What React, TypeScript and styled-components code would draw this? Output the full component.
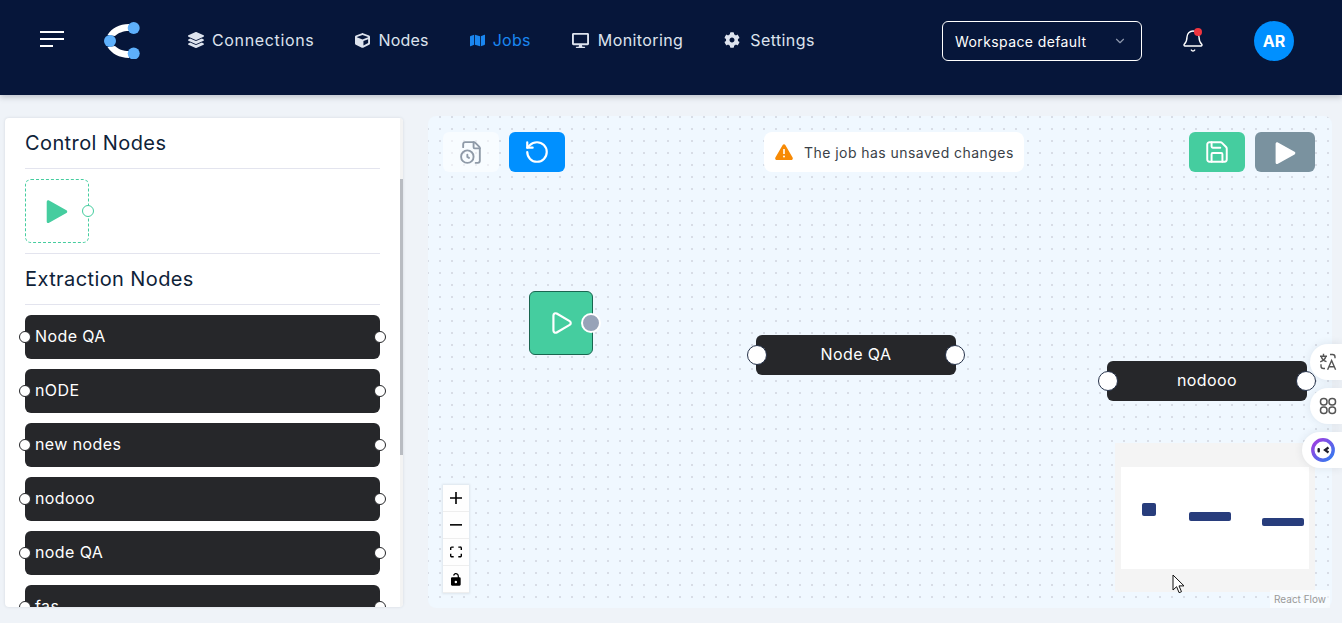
import React from "react";
import styled, { createGlobalStyle } from "styled-components";
import { FaCog, FaCube, FaDesktop, FaLayerGroup, FaMap } from "react-icons/fa";
import { Bell, ChevronDown, FileClock, Play, RotateCcw, Save } from "lucide-react";

const GlobalStyle = createGlobalStyle`
  html, body {
    margin: 0;
    height: 100%;
    overflow: hidden;
    background: #eff3f8;
    font-family: Inter, "Noto Sans", sans-serif;
  }
  * { box-sizing: border-box; }
`;

const navItems = [
  { label: "Connections", icon: <FaLayerGroup size={16} />, gap: 8, spacing: 0.65 },
  { label: "Nodes", icon: <FaCube size={15} />, gap: 8, spacing: 0.2 },
  { label: "Jobs", icon: <FaMap size={15} />, gap: 8, spacing: 0.3, active: true },
  { label: "Monitoring", icon: <FaDesktop size={17} />, gap: 9, spacing: 0.4 },
  { label: "Settings", icon: <FaCog size={16} />, gap: 10, spacing: 0.4 },
];

const extractionNodes = ["Node QA", "nODE", "new nodes", "nodooo", "node QA", "fas"];

const Logo = () => (
  <svg width="36" height="37" viewBox="0 0 36 37">
    <path d="M3.5 13C8 6 15 2 25 2L25 9C19 9 14 11 11 14Z" fill="#fff" />
    <path d="M3.5 25C8 32 15 35.5 25 36L25 29C19 29 14 27 11 24Z" fill="#fff" />
    <circle cx="29.7" cy="6" r="6" fill="#5eb0fb" />
    <circle cx="6" cy="19" r="6" fill="#5eb0fb" />
    <circle cx="29.7" cy="31.5" r="6" fill="#5eb0fb" />
  </svg>
);

const Burger = () => (
  <svg width="24" height="16" viewBox="0 0 24 16">
    <path d="M0 1h24M0 8h24M0 15h13" stroke="#fff" strokeWidth="2" />
  </svg>
);

const FilledPlay = ({ size, color }: { size: number; color: string }) => (
  <svg width={size} height={size} viewBox="1.5 0 24 24">
    <path
      d="M4 3.6c0-1.2 1.2-1.9 2.2-1.3l16 9c1 .6 1 2 0 2.6l-16 9c-1 .6-2.2-.1-2.2-1.3z"
      fill={color}
    />
  </svg>
);

const Warning = () => (
  <svg width="18" height="16" viewBox="0 0 18 16">
    <path
      d="M7.7 1c.6-1 2-1 2.6 0l7.3 12.6c.6 1-.1 2.3-1.3 2.3H1.7C.5 15.9-.2 14.6.4 13.6z"
      fill="#f78a05"
    />
    <path d="M9 5v5" stroke="#fff" strokeWidth="1.6" />
    <circle cx="9" cy="12.5" r="1" fill="#fff" />
  </svg>
);

const TranslateGlyph = () => (
  <svg width="18" height="18" viewBox="0 0 18 18" fill="none" stroke="#555" strokeWidth="1.4">
    <path d="M4.5 .8v2.2M1 3.2h7M2.2 3.500c.8 2.800 2.600 4.300 5.300 5.200M6.800 3.500C6.200 6 4.300 7.800 1.200 8.800" />
    <path d="M8.600 16.800 12.600 7.500l4 9.300M10 13.800h5.200" />
    <path d="M11 1.500h2.500a2.500 2.500 0 0 1 2.500 2.500v1.200M2 11.200v1.800a2.500 2.500 0 0 0 2.500 2.500H6" />
  </svg>
);

const GridGlyph = () => (
  <svg width="18" height="18" viewBox="0 0 18 18" fill="none" stroke="#555" strokeWidth="1.5">
    <rect x="1.5" y="1.5" width="6.5" height="6.5" rx="3" />
    <rect x="10" y="1.5" width="6.5" height="6.5" rx="3" />
    <rect x="1.5" y="10" width="6.5" height="6.5" rx="3" />
    <rect x="10" y="10" width="6.5" height="6.5" rx="3" />
  </svg>
);

const BotGlyph = () => (
  <svg width="24" height="24" viewBox="0 0 24 24">
    <defs>
      <linearGradient id="ring" x1="0" y1="0" x2="1" y2="1">
        <stop offset="0" stopColor="#a33be0" />
        <stop offset="1" stopColor="#2f7df0" />
      </linearGradient>
    </defs>
    <circle cx="12" cy="12" r="10.2" fill="#fff" stroke="url(#ring)" strokeWidth="3.4" />
    <rect x="6.5" y="10" width="2.4" height="4.5" rx="1" fill="#1c1c28" />
    <path d="M17.5 9.5 14 12l3.500 2.500" fill="none" stroke="#1c1c28" strokeWidth="2.200" />
  </svg>
);

const MiniMapDrawing = () => (
  <svg width="200" height="149" viewBox="0 0 200 149">
    <rect width="200" height="149" fill="#f4f4f4" />
    <rect x="6" y="24" width="188" height="102" fill="#fff" />
    <rect x="27" y="60" width="14" height="13" rx="2" fill="#283d7c" />
    <rect x="74" y="69" width="42" height="9" rx="2" fill="#283d7c" />
    <rect x="147" y="75" width="42" height="8" rx="2" fill="#283d7c" />
  </svg>
);

const Cursor = () => (
  <svg width="14" height="20" viewBox="0 0 14 20">
    <path
      d="M1 1v15l3.600-3.300 2.500 6 2.400-1-2.500-5.800h5z"
      fill="#fff"
      stroke="#111"
      strokeWidth="1"
    />
  </svg>
);

export default function App() {
  return (
    <>
      <GlobalStyle />
      <Header>
        <BurgerSlot>
          <Burger />
        </BurgerSlot>
        <LogoSlot>
          <Logo />
        </LogoSlot>
        <Nav>
          {navItems.map((item) => (
            <NavItem
              key={item.label}
              $active={item.active}
              $gap={item.gap}
              $spacing={item.spacing}
            >
              {item.icon}
              <span>{item.label}</span>
            </NavItem>
          ))}
        </Nav>
        <WorkspaceSelect>
          <span>Workspace default</span>
          <ChevronDown size={14} color="#8d97ad" />
        </WorkspaceSelect>
        <BellSlot>
          <Bell size={24} strokeWidth={1.4} color="#fff" />
          <BellDot />
        </BellSlot>
        <Avatar>AR</Avatar>
      </Header>

      <Main>
        <Sidebar>
          <SectionTitle>Control Nodes</SectionTitle>
          <ControlRow>
            <ControlTile>
              <FilledPlay size={26} color="#45cd9f" />
              <ControlHandle />
            </ControlTile>
          </ControlRow>
          <SectionTitle>Extraction Nodes</SectionTitle>
          <NodeList>
            {extractionNodes.map((name) => (
              <NodeBar key={name}>
                <ListHandle $side="left" />
                {name}
                <ListHandle $side="right" />
              </NodeBar>
            ))}
          </NodeList>
          <ScrollTrack>
            <ScrollThumb />
          </ScrollTrack>
        </Sidebar>

        <Canvas>
          <Toolbar>
            <ToolGroup>
              <ToolButton $bg="rgba(255,255,255,0.5)" $w={56}>
                <FileClock size={25} color="#8f9aa8" strokeWidth={1.8} />
              </ToolButton>
              <ToolButton $bg="#0090ff" $w={56}>
                <RotateCcw size={26} color="#fff" strokeWidth={2} />
              </ToolButton>
            </ToolGroup>
            <Notice>
              <Warning />
              The job has unsaved changes
            </Notice>
            <ToolGroup $right>
              <ToolButton $bg="#45cd9f" $w={56}>
                <Save size={26} color="#fff" strokeWidth={1.8} />
              </ToolButton>
              <ToolButton $bg="#7a929f" $w={60}>
                <FilledPlay size={25} color="#fff" />
              </ToolButton>
            </ToolGroup>
          </Toolbar>

          <StartNode>
            <Play size={26} color="#fff" strokeWidth={2} />
            <StartHandle />
          </StartNode>
          <FlowNode $x={328} $y={219}>
            <FlowHandle $side="left" />
            Node QA
            <FlowHandle $side="right" />
          </FlowNode>
          <FlowNode $x={679} $y={245}>
            <FlowHandle $side="left" />
            nodooo
            <FlowHandle $side="right" />
          </FlowNode>

          <ZoomControls>
            <ZoomButton>
              <svg width="12" height="12" viewBox="0 0 32 32">
                <path d="M32 18.133H18.133V32h-4.266V18.133H0v-4.266h13.867V0h4.266v13.867H32z" />
              </svg>
            </ZoomButton>
            <ZoomButton>
              <svg width="12" height="2" viewBox="0 0 32 5">
                <path d="M0 0h32v4.2H0z" />
              </svg>
            </ZoomButton>
            <ZoomButton>
              <svg width="12" height="12" viewBox="0 0 32 30">
                <path d="M3.692 4.63c0-.53.4-.938.939-.938h5.215V0H4.708C2.13 0 0 2.054 0 4.63v5.216h3.692V4.631zM27.354 0h-5.2v3.692h5.17c.53 0 .984.4.984.939v5.215H32V4.631A4.624 4.624 0 0027.354 0zm.954 24.83c0 .532-.4.94-.939.94h-5.215v3.768h5.215c2.577 0 4.631-2.13 4.631-4.707v-5.139h-3.692v5.139zm-23.677.94c-.531 0-.939-.4-.939-.94v-5.138H0v5.139c0 2.577 2.13 4.707 4.708 4.707h5.138V25.77H4.631z" />
              </svg>
            </ZoomButton>
            <ZoomButton>
              <svg width="10" height="13" viewBox="0 0 25 32">
                <path d="M21.333 10.667H19.81V7.619C19.81 3.429 16.38 0 12.19 0c-1.714 0-3.048.381-4.38 1.333-1.43 1.143-2.439 2.572-3.002 4.286l3.143 1.143c.381-1.143.953-2.095 1.81-2.762.857-.666 1.714-.952 2.428-.952 2.476 0 4.571 2.095 4.571 4.571v3.048H2.857A2.865 2.865 0 000 13.524v15.238C0 30.286 1.333 31.619 2.857 31.619h18.476a2.865 2.865 0 002.857-2.857V13.524a2.865 2.865 0 00-2.857-2.857zM12.19 25.524a3.048 3.048 0 110-6.095 3.048 3.048 0 010 6.095z" />
              </svg>
            </ZoomButton>
          </ZoomControls>

          <MiniMapSlot>
            <MiniMapDrawing />
          </MiniMapSlot>
          <CursorSlot>
            <Cursor />
          </CursorSlot>
          <Attribution>React Flow</Attribution>
        </Canvas>
      </Main>

      <FloatDock>
        <FloatButton>
          <TranslateGlyph />
        </FloatButton>
        <FloatButton>
          <GridGlyph />
        </FloatButton>
        <FloatButton $wide>
          <BotGlyph />
        </FloatButton>
      </FloatDock>
    </>
  );
}

const Header = styled.header`
  display: flex;
  align-items: flex-start;
  height: 95px;
  padding: 21px 48px 0 40px;
  background: #06163a;
  box-shadow: 0 2px 6px rgba(30, 40, 60, 0.25);
  position: relative;
`;

const BurgerSlot = styled.div`
  display: flex;
  align-items: center;
  height: 36px;
  width: 24px;
`;

const LogoSlot = styled.div`
  margin-left: 40px;
  height: 37px;
  margin-top: 1px;
`;

const Nav = styled.nav`
  display: flex;
  align-items: center;
  gap: 41px;
  height: 38px;
  margin-left: 48px;
`;

const NavItem = styled.div<{ $active?: boolean; $gap: number; $spacing: number }>`
  display: flex;
  align-items: center;
  gap: ${(p) => p.$gap}px;
  font-size: 16px;
  letter-spacing: ${(p) => p.$spacing}px;
  color: ${(p) => (p.$active ? "#1a86f0" : "#dde3ee")};
`;

const WorkspaceSelect = styled.div`
  display: flex;
  align-items: center;
  justify-content: space-between;
  width: 200px;
  height: 40px;
  margin-left: auto;
  padding: 0 14px 0 12px;
  border: 1px solid #fff;
  border-radius: 6px;
  color: #fff;
  font-size: 14px;
  letter-spacing: 0.4px;
`;

const BellSlot = styled.div`
  position: relative;
  display: flex;
  align-items: center;
  height: 40px;
  margin-left: 39px;
`;

const BellDot = styled.span`
  position: absolute;
  top: 7px;
  right: 3px;
  width: 8px;
  height: 8px;
  border-radius: 50%;
  background: #f0353f;
`;

const Avatar = styled.div`
  display: flex;
  align-items: center;
  justify-content: center;
  width: 40px;
  height: 40px;
  margin-left: 49px;
  border-radius: 50%;
  background: #0090ff;
  color: #fff;
  font-size: 16px;
  font-weight: 700;
`;

const Main = styled.main`
  display: flex;
  align-items: flex-start;
  gap: 25px;
  padding: 21px 10px 0 5px;
`;

const Sidebar = styled.aside`
  position: relative;
  flex: none;
  width: 398px;
  height: 489px;
  margin-top: 2px;
  padding: 0 23px 0 20px;
  overflow: hidden;
  background: #fff;
  border-radius: 4px;
  box-shadow: 0 0 3px rgba(60, 70, 90, 0.15);
`;

const SectionTitle = styled.h3`
  height: 51px;
  margin: 0;
  display: flex;
  align-items: center;
  border-bottom: 1px solid #e3e4ee;
  color: #0e2238;
  font-size: 20px;
  font-weight: 400;
  letter-spacing: 0.4px;
`;

const ControlRow = styled.div`
  height: 85px;
  padding-top: 10px;
  border-bottom: 1px solid #e3e4ee;
`;

const ControlTile = styled.div`
  position: relative;
  display: flex;
  align-items: center;
  justify-content: center;
  width: 64px;
  height: 64px;
  border: 1px dashed #45cd9f;
  border-radius: 6px;
`;

const ControlHandle = styled.span`
  position: absolute;
  top: 25px;
  right: -6px;
  width: 12px;
  height: 12px;
  border-radius: 50%;
  background: #fff;
  border: 1px solid #45cd9f;
`;

const NodeList = styled.div`
  display: flex;
  flex-direction: column;
  gap: 10px;
  padding-top: 10px;
`;

const NodeBar = styled.div`
  position: relative;
  flex: none;
  display: flex;
  align-items: center;
  height: 44px;
  padding: 0 0 2px 10px;
  border-radius: 6px;
  background: #26272a;
  color: #fff;
  font-size: 16px;
  letter-spacing: 0.4px;
`;

const ListHandle = styled.span<{ $side: "left" | "right" }>`
  position: absolute;
  top: 16px;
  ${(p) => p.$side}: -6px;
  width: 12px;
  height: 12px;
  border-radius: 50%;
  background: #fff;
  border: 1px solid #26272a;
`;

const ScrollTrack = styled.div`
  position: absolute;
  top: 0;
  right: 0;
  width: 3px;
  height: 100%;
  padding-top: 61px;
  background: #f3f3f3;
`;

const ScrollThumb = styled.div`
  height: 276px;
  background: #b9bcc2;
`;

const Canvas = styled.section`
  position: relative;
  flex: 1;
  height: 492px;
  padding: 16px 17px 0 15px;
  background-color: #f0f8ff;
  background-image: conic-gradient(from 0deg at 2px 2px, transparent 75%, #d8dde6 0);
  background-size: 12px 12px;
  background-position: 11px 0;
  border-radius: 8px;
`;

const Toolbar = styled.div`
  display: flex;
  align-items: center;
`;

const ToolGroup = styled.div<{ $right?: boolean }>`
  display: flex;
  gap: 10px;
  margin-left: ${(p) => (p.$right ? "auto" : "0")};
`;

const ToolButton = styled.div<{ $bg: string; $w: number }>`
  display: flex;
  align-items: center;
  justify-content: center;
  width: ${(p) => p.$w}px;
  height: 40px;
  border-radius: 6px;
  background: ${(p) => p.$bg};
`;

const Notice = styled.div`
  display: flex;
  align-items: center;
  gap: 11px;
  width: 260px;
  height: 40px;
  margin-left: 199px;
  padding-left: 11px;
  border-radius: 8px;
  background: #fff;
  color: #3a3f47;
  font-size: 14px;
  letter-spacing: 0.45px;
`;

const StartNode = styled.div`
  position: absolute;
  left: 101px;
  top: 175px;
  display: flex;
  align-items: center;
  justify-content: center;
  width: 64px;
  height: 64px;
  border: 1px solid #1a6650;
  border-radius: 6px;
  background: #45cd9f;
`;

const StartHandle = styled.span`
  position: absolute;
  top: 21px;
  right: -9px;
  width: 20px;
  height: 20px;
  border-radius: 50%;
  border: 2px solid #fff;
  background: #97a3b8;
`;

const FlowNode = styled.div<{ $x: number; $y: number }>`
  position: absolute;
  left: ${(p) => p.$x}px;
  top: ${(p) => p.$y}px;
  display: flex;
  align-items: center;
  justify-content: center;
  width: 200px;
  height: 40px;
  padding-bottom: 2px;
  border-radius: 6px;
  background: #26272a;
  color: #fff;
  font-size: 16px;
  letter-spacing: 0.4px;
`;

const FlowHandle = styled.span<{ $side: "left" | "right" }>`
  position: absolute;
  top: 10px;
  ${(p) => p.$side}: -9px;
  width: 20px;
  height: 20px;
  border-radius: 50%;
  background: #fff;
  border: 1px solid #26324a;
`;

const ZoomControls = styled.div`
  position: absolute;
  left: 15px;
  top: 369px;
  display: flex;
  flex-direction: column;
  box-shadow: 0 0 2px 1px rgba(0, 0, 0, 0.08);
`;

const ZoomButton = styled.div`
  display: flex;
  align-items: center;
  justify-content: center;
  width: 26px;
  height: 27px;
  background: #fefefe;
  border-bottom: 1px solid #eee;
`;

const MiniMapSlot = styled.div`
  position: absolute;
  left: 687px;
  top: 327px;
  line-height: 0;
`;

const CursorSlot = styled.div`
  position: absolute;
  left: 744px;
  top: 458px;
  line-height: 0;
`;

const Attribution = styled.div`
  position: absolute;
  right: 2px;
  bottom: 0;
  padding: 3px 4px;
  background: rgba(255, 255, 255, 0.5);
  color: #999;
  font-size: 10px;
`;

const FloatDock = styled.div`
  position: absolute;
  top: 344px;
  right: 0;
  display: flex;
  flex-direction: column;
  align-items: flex-end;
  gap: 8px;
`;

const FloatButton = styled.div<{ $wide?: boolean }>`
  display: flex;
  align-items: center;
  width: ${(p) => (p.$wide ? "40px" : "32px")};
  height: 36px;
  padding-left: 9px;
  border-radius: 18px 0 0 18px;
  background: #fff;
  box-shadow: 0 0 8px rgba(40, 50, 70, 0.1);
`;
